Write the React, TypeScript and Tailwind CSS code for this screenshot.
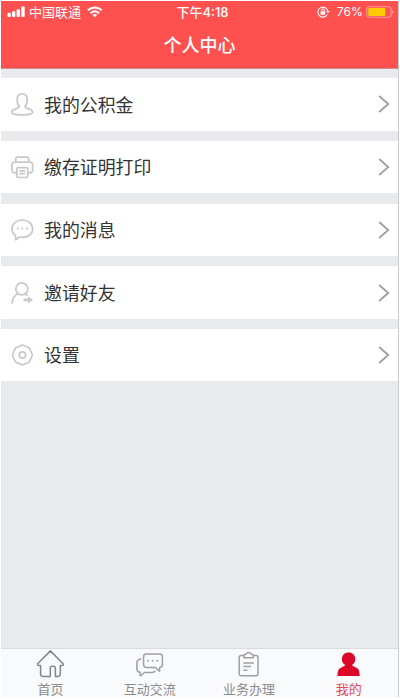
import React from 'react';

const MENU_ITEMS = [
  {
    label: '我的公积金',
    icon: (
      <path d="M9.3 14.2C7.8 12.8 7.2 10 7.2 7.4C7.2 4 9.2 1.9 12.2 1.9S17.2 4 17.2 7.4C17.2 10 16.6 12.8 15.1 14.2C15.1 15.6 16.3 16 18.2 16.6C21.2 17.5 22.8 18.6 22.6 20.5C22.3 22.4 18 22.9 12.2 22.9S2.1 22.4 1.8 20.5C1.6 18.6 3.2 17.5 6.2 16.6C8.1 16 9.3 15.6 9.3 14.2Z" />
    ),
  },
  {
    label: '缴存证明打印',
    icon: (
      <>
        <path d="M5.8 7V4a1.8 1.8 0 0 1 1.8-1.8h9.4A1.8 1.8 0 0 1 18.8 4v3" />
        <path d="M6.5 17.8H4.6A2.6 2.6 0 0 1 2 15.2V9.7a2.6 2.6 0 0 1 2.6-2.6h15.4a2.6 2.6 0 0 1 2.6 2.6v5.5a2.6 2.6 0 0 1-2.6 2.6h-1.9" />
        <rect x="6.8" y="12.6" width="11" height="9.9" rx="1.5" />
        <path d="M9.3 15.8h6M9.3 18.7h6" />
      </>
    ),
  },
  {
    label: '我的消息',
    icon: (
      <>
        <path d="M5.6 17.6C3.2 15.9 2 13.5 2 10.9C2 5.9 6.4 2 12.3 2S22.6 5.9 22.6 10.9S18.2 19.4 12.3 19.4C11 19.4 10.1 19.3 9.2 19L5.7 21.8Z" />
        <path strokeWidth="2.2" strokeLinecap="round" d="M7.7 10.6h.01M12.3 10.6h.01M16.9 10.6h.01" />
      </>
    ),
  },
  {
    label: '邀请好友',
    icon: (
      <>
        <circle cx="11.8" cy="7.9" r="6" />
        <path d="M2.1 22.6C2.3 17.6 4.4 14.3 8.3 12.8M15.3 12.8l2.3 2" />
        <path d="M13.5 18.9h5" strokeWidth="2.6" />
        <path d="M18 15.2v7.4l5-3.7z" fill="currentColor" stroke="none" />
      </>
    ),
  },
  {
    label: '设置',
    icon: (
      <>
        <path d="M12.4 2L19.4 5L22.4 12L19.4 19L12.4 22L5.4 19L2.4 12L5.4 5Z" />
        <circle cx="12.4" cy="12" r="3.2" />
      </>
    ),
  },
];

const TABS = [
  {
    label: '首页',
    icon: <path d="M13.4.9L25.9 13.5C26.9 14.7 26.3 15.6 25.1 15.6H23.3V24.1Q23.3 26.4 21.1 26.4H18.4V18Q18.4 16.2 16.8 16.2H14.8Q13.3 16.2 13.3 18V26.4H5.7Q3.6 26.4 3.6 24.1V15.6H1.8C.6 15.6 0 14.7.9 13.5Z" />,
    home: true,
  },
  {
    label: '互动交流',
    icon: (
      <>
        <path d="M10 4.1H23.6Q26.4 4.1 26.4 6.9V14.6Q26.4 17.4 23.6 17.4V21.2L19.2 17.4H10Q7.6 17.4 7.6 14.6V6.9Q7.6 4.1 10 4.1Z" />
        <path d="M5.3 9.1Q.9 9.4.9 13V19Q.9 22 4.2 22.3V25.8L8.4 22.5H16.1Q18.1 22.5 19.3 20.6" />
        <path strokeWidth="2" strokeLinecap="round" d="M12 10.7h.01M16.6 10.7h.01M21.2 10.7h.01" />
      </>
    ),
  },
  {
    label: '业务办理',
    icon: (
      <>
        <path d="M9.2 5.4H6.2Q4.2 5.4 4.2 7.4V23.8Q4.2 25.8 6.2 25.8H21Q23 25.8 23 23.8V7.4Q23 5.4 21 5.4H18" />
        <path d="M8.9 7.8V5.4Q9 4.4 10.8 4.3Q11.8 2.6 13.6 2.6T16.4 4.3Q18.2 4.4 18.3 5.4V7.8Z" />
        <path d="M8.4 12.9h10.5M8.4 16.6h7.6M8.4 20.3h4" />
      </>
    ),
  },
  {
    label: '我的',
    active: true,
    icon: (
      <path
        fill="currentColor"
        stroke="none"
        d="M11.2 15.1C9 13.7 7.9 11.7 7.9 9.3C7.9 5.1 10.8 2.5 14.6 2.5S21.3 5.1 21.3 9.3C21.3 11.7 20.2 13.7 18 15.1C18.5 16.3 20 16.7 21.8 17.4C24.6 18.5 25.7 20.9 25.7 26H3.5C3.5 20.9 4.6 18.5 7.4 17.4C9.2 16.7 10.7 16.3 11.2 15.1Z"
      />
    ),
  },
];

const StatusBar: React.FC = () => (
  <div className="grid grid-cols-3 items-center h-[22px] pl-[6px] pr-[4px] text-[13px] leading-none">
    <div className="flex items-center">
      <svg width="19" height="12" viewBox="0 0 19 12" fill="currentColor">
        <rect x="0.5" y="6.8" width="3.3" height="4.2" rx="1" />
        <rect x="5" y="5.3" width="3.3" height="5.7" rx="1" />
        <rect x="9.6" y="3.2" width="3.3" height="7.8" rx="1" />
        <rect x="14.2" y="0.6" width="3.5" height="10.4" rx="1" />
      </svg>
      <span className="ml-[3px] whitespace-nowrap">中国联通</span>
      <svg className="ml-[6px]" width="17" height="12" viewBox="0 0 17 12" fill="none" stroke="currentColor" strokeWidth="2">
        <path d="M.8 4.3C4.8.5 10.8.5 14.8 4.3M3.5 7.2c2.6-2.4 6-2.4 8.6 0" />
        <path d="M5.4 8.8L7.8 11.2L10.2 8.8Q7.8 7.1 5.4 8.8Z" fill="currentColor" stroke="none" />
      </svg>
    </div>
    <span className="text-center whitespace-nowrap font-medium pl-1">下午4:18</span>
    <div className="flex items-center justify-end">
      <svg width="13" height="12" viewBox="0 0 13 12" fill="none" stroke="currentColor" strokeWidth="1.1">
        <path d="M10.3 8.6A5 5 0 1 1 10.9 5.4" />
        <path d="M9.2 5h3.4l-1.7 2.3z" fill="currentColor" stroke="none" />
        <rect x="3.6" y="5.4" width="4.6" height="3.4" fill="currentColor" stroke="none" />
        <path d="M4.5 5.5V4.4a1.4 1.4 0 0 1 2.8 0v1.1" />
      </svg>
      <span className="ml-[7px] font-['Inter'] text-[12.2px]">76%</span>
      <svg className="ml-[3px]" width="28" height="12" viewBox="0 0 28 12">
        <rect x="0.8" y="0.8" width="24.2" height="10.4" rx="2.4" fill="none" stroke="#ff9c9c" strokeWidth="1.1" />
        <rect x="2.2" y="2.1" width="17.2" height="7.8" rx="0.8" fill="#ffcb05" />
        <path d="M26 4.2Q27.6 4.8 27.6 6T26 7.8Z" fill="#ff9c9c" />
      </svg>
    </div>
  </div>
);

const App: React.FC = () => {
  return (
    <div className="h-[699px] w-[400px] bg-white pt-px pl-px pr-px pb-[2px] overflow-hidden font-['Inter','Noto_Sans_CJK_SC',sans-serif]">
      <div className="h-full flex flex-col bg-[#e9eaee] border-r border-[#c9cacd]">
        {/* Header */}
        <header className="h-[67.5px] shrink-0 bg-[#ff5050] border-b border-[#d58b8d] text-white">
          <StatusBar />
          <h1 className="h-[44px] pt-[2px] flex items-center justify-center text-[18px] font-medium leading-none">个人中心</h1>
        </header>

        {/* Menu */}
        <nav className="flex-1 flex flex-col gap-[10.3px] pt-[9.8px]">
          {MENU_ITEMS.map((item) => (
            <button key={item.label} className="h-[52.4px] shrink-0 w-full flex items-center bg-white pl-[9px] pr-[8.5px] text-left">
              <svg className="text-[#c8c8c8]" width="24" height="24" viewBox="0 0 24 24" fill="none" stroke="currentColor" strokeWidth="1.7" strokeLinejoin="round">
                {item.icon}
              </svg>
              <span className="ml-[10px] pt-[2px] flex-1 text-[17.9px] leading-none text-[#333]">{item.label}</span>
              <svg width="12" height="18" viewBox="0 0 12 18" fill="none" stroke="#9f9f9f" strokeWidth="1.8">
                <path d="M1.2 1L10.2 9L1.2 17" />
              </svg>
            </button>
          ))}
        </nav>

        {/* Tab bar */}
        <footer className="h-[49.5px] shrink-0 grid grid-cols-4 bg-[#f9fafc] border-t border-[#d9dadd]">
          {TABS.map((tab) => (
            <button
              key={tab.label}
              className={`flex flex-col items-center pt-[1px] ${tab.active ? 'text-[#dd0827]' : tab.home ? 'text-[#858585]' : 'text-[#a0a0a0]'}`}
            >
              <svg width="28" height="28" viewBox="0 0 28 28" fill="none" stroke="currentColor" strokeWidth="1.5" strokeLinejoin="round">
                {tab.icon}
              </svg>
              <span className={`mt-[5px] text-[13px] leading-none ${tab.active ? 'pl-px text-[#e24a50]' : 'text-[#8c8c8c]'}`}>{tab.label}</span>
            </button>
          ))}
        </footer>
      </div>
    </div>
  );
};

export default App;
